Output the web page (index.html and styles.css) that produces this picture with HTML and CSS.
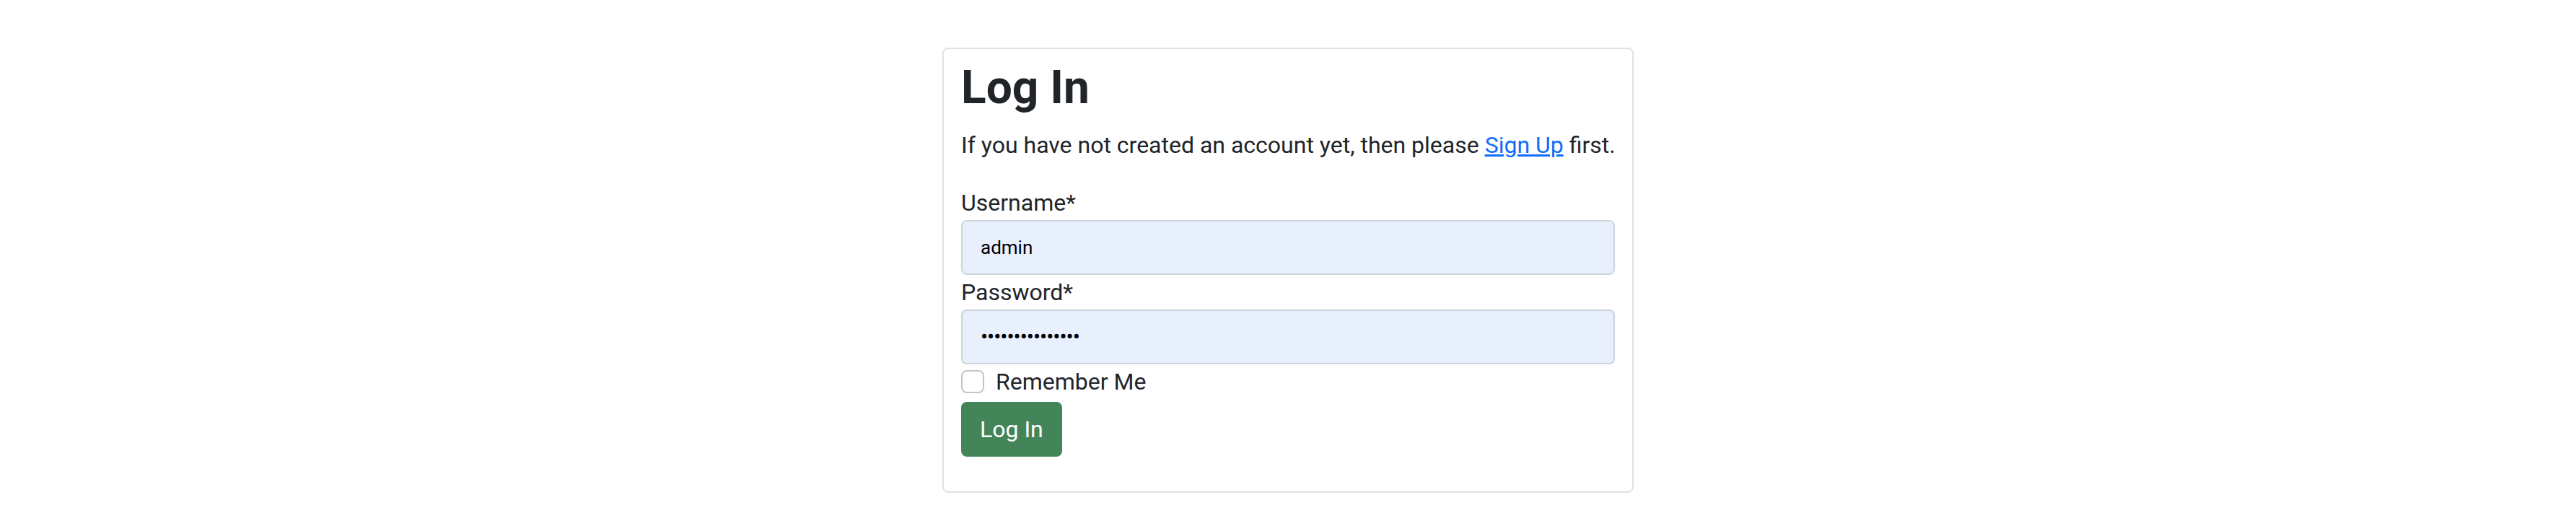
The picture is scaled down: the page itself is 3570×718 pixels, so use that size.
FILE: index.html
```html
<!DOCTYPE html>
<html lang="en">
<head>
<meta charset="utf-8">
<title>Log In</title>
<link rel="stylesheet" href="styles.css">
</head>
<body>
<main class="page">
  <section class="card">
    <h1 class="title">Log In</h1>
    <p class="intro">If you have not created an account yet, then please <a href="#" class="link">Sign Up</a> first.</p>
    <form class="form">
      <label class="label" for="username">Username*</label>
      <input class="control" id="username" type="text" value="admin">
      <label class="label" for="password">Password*</label>
      <input class="control control-pass" id="password" type="password" value="adminpassword12">
      <div class="check">
        <input class="check-input" id="remember" type="checkbox">
        <label class="check-label" for="remember">Remember Me</label>
      </div>
      <button class="btn" type="button">Log In</button>
    </form>
  </section>
</main>
</body>
</html>
```

FILE: styles.css
```css
html, body {
  margin: 0;
  padding: 0;
  background: #fff;
}
body {
  font-family: Roboto, "Liberation Sans", sans-serif;
  font-size: 32px;
  line-height: 1.5;
  color: #212529;
}
.page {
  display: flex;
  justify-content: center;
  padding-top: 66px;
}
.card {
  width: 958px;
  box-sizing: border-box;
  border: 2px solid #dee2e6;
  border-radius: 8px;
  padding: 16px 24px 48px;
}
.title {
  margin: 0 0 16px;
  font-size: 64px;
  font-weight: 700;
  line-height: 1.2;
}
.intro {
  margin: 0 0 32px;
  white-space: nowrap;
}
.link {
  color: #0d6efd;
  text-decoration: underline;
}
.form {
  display: flex;
  flex-direction: column;
  align-items: flex-start;
}
.label {
  display: block;
}
.control {
  display: block;
  width: 100%;
  box-sizing: border-box;
  height: 76px;
  margin: 0;
  padding: 0 25px;
  border: 2px solid #ced4da;
  border-radius: 8px;
  background: #e8f0fe;
  color: #000;
  font-family: Roboto, "Liberation Sans", sans-serif;
  font-size: 26px;
  outline: none;
}
.control-pass {
  font-size: 30px;
  letter-spacing: -1px;
}
.check {
  display: flex;
  align-items: flex-start;
  min-height: 48px;
  margin-bottom: 4px;
}
.check-input {
  appearance: none;
  -webkit-appearance: none;
  width: 32px;
  height: 32px;
  margin: 8px 16px 0 0;
  box-sizing: border-box;
  border: 2px solid #c4c4c4;
  border-radius: 8px;
  background: #fff;
}
.check-label {
  display: block;
}
.btn {
  font-family: Roboto, "Liberation Sans", sans-serif;
  font-size: 32px;
  line-height: 1.5;
  padding: 12px 24px;
  border: 2px solid #438559;
  border-radius: 8px;
  background: #438559;
  color: #fff;
  cursor: pointer;
}
```
